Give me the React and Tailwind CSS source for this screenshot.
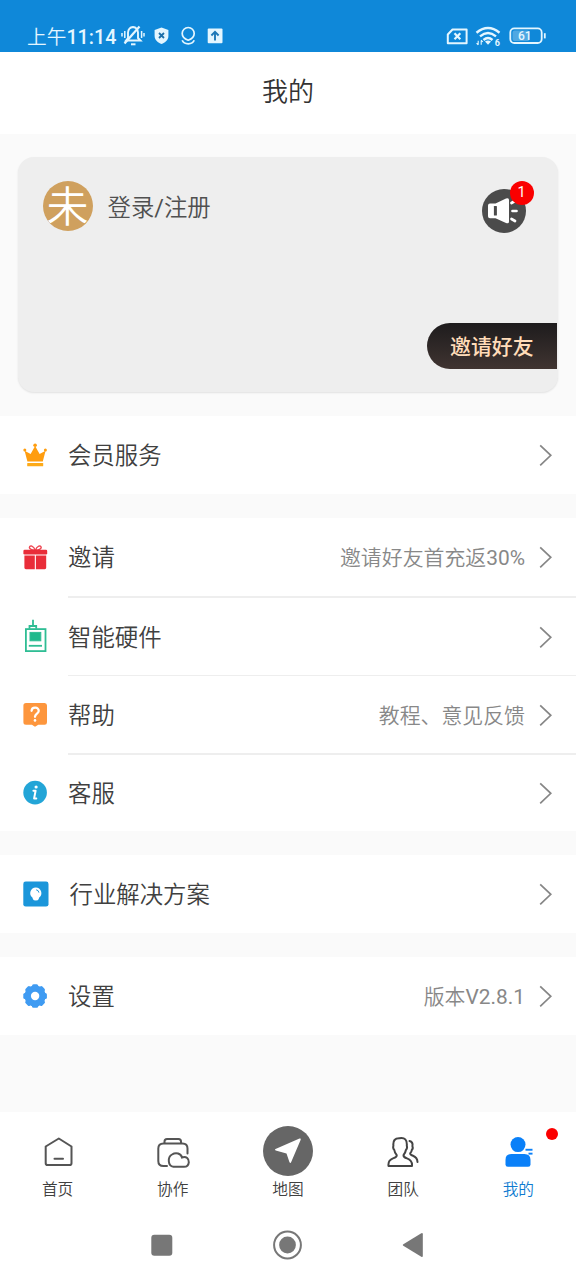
import React from "react";

function Chevron() {
  return (
    <svg className="mr-6 ml-[14px] h-[22px] w-[13px] shrink-0" viewBox="0 0 13 22" fill="none" stroke="#868686" strokeWidth="1.7">
      <path d="M1.2 1.3 L11.8 11.3 L1.2 21.3" />
    </svg>
  );
}

function CrownIcon() {
  return (
    <svg width="26" height="26" viewBox="0 0 26 26" fill="#ff9d0f">
      <path d="M4.4 19.5 L1.6 8.7 L7.6 12.1 L12.1 4 L16.6 12.1 L22.6 8.7 L19.8 19.5 Z" />
      <circle cx="12.1" cy="3.3" r="1.8" />
      <circle cx="1.8" cy="7.9" r="1.5" />
      <circle cx="22.4" cy="7.9" r="1.5" />
      <rect x="4.2" y="20.9" width="16" height="3.4" rx="0.6" fill="#fdaa18" />
    </svg>
  );
}

function GiftIcon() {
  return (
    <svg width="26" height="26" viewBox="0 0 26 26" fill="#e92d39">
      <path d="M12.3 5.4 C10 5 6.6 4.6 6.4 2.6 C6.8 -0.2 10.6 0.4 12.3 5.4 C14 0.4 17.8 -0.2 18.2 2.6 C18 4.6 14.6 5 12.3 5.4 Z" fill="none" stroke="#ee4652" strokeWidth="1.4" />
      <rect x="0.4" y="4.8" width="23.8" height="4.8" rx="1.3" />
      <path d="M1.4 10.6 H11.8 V24.2 H2.9 Q1.4 24.2 1.4 22.8 Z M12.9 10.6 H23.2 V22.8 Q23.2 24.2 21.8 24.2 H12.9 Z" />
    </svg>
  );
}

function DeviceIcon() {
  return (
    <svg width="26" height="36" viewBox="0 0 26 36" fill="none" stroke="#2fbd94" strokeWidth="1.8">
      <rect x="2.9" y="10.1" width="19.6" height="22" />
      <path d="M6.5 9.8 V7 H13.2 V9.8 M10 6.8 V0.8" />
      <path d="M5.8 26.8 H19" />
      <rect x="7" y="13.4" width="10.8" height="8.4" fill="#1fb98c" strokeWidth="1" />
    </svg>
  );
}

function HelpIcon() {
  return (
    <svg width="26" height="26" viewBox="0 0 26 26">
      <path d="M3 0.1 H21.6 Q24 0.1 24 2.6 V19.2 Q24 21.7 21.6 21.7 H15.3 L12 23.8 L8.9 21.7 H3 Q0.4 21.7 0.4 19.2 V2.6 Q0.4 0.1 3 0.1 Z" fill="#fd963d" />
      <path d="M8.6 7.8 C8.8 3.4 15.9 3.6 15.7 8 C15.5 10.8 12.1 10.6 12 13.8" fill="none" stroke="#fff" strokeWidth="2.3" strokeLinecap="round" />
      <circle cx="12" cy="17.4" r="1.3" fill="#fff" />
    </svg>
  );
}

function InfoIcon() {
  return (
    <svg width="26" height="26" viewBox="0 0 26 26">
      <circle cx="12.1" cy="12.6" r="11.8" fill="#23a5d7" />
      <circle cx="13.1" cy="7" r="1.6" fill="#fff" />
      <path d="M10.4 10.8 H12.6 L11.1 18.4 H13.3" fill="none" stroke="#fff" strokeWidth="2" strokeLinejoin="round" strokeLinecap="round" />
    </svg>
  );
}

function BulbIcon() {
  return (
    <svg width="26" height="26" viewBox="0 0 26 26">
      <rect x="0.3" y="0.6" width="25.2" height="25" rx="2.4" fill="#1b96da" />
      <path d="M12.8 6.4 a5.6 5.6 0 0 1 3.4 10 L15.6 18.2 Q15.2 19.6 12.8 19.6 Q10.4 19.6 10 18.2 L9.4 16.4 A5.6 5.6 0 0 1 12.8 6.4 Z" fill="#fff" />
      <path d="M13.2 8.8 Q15.6 9.1 15.9 11.6" stroke="#1b96da" fill="none" strokeWidth="1" />
    </svg>
  );
}

function GearIcon() {
  return (
    <svg width="26" height="26" viewBox="0 0 26 26" fill="#3f9bf2">
      <circle cx="12.1" cy="13" r="10.6" />
      <g>
        <rect x="9" y="1.2" width="6.2" height="23.6" rx="1.6" />
        <rect x="9" y="1.2" width="6.2" height="23.6" rx="1.6" transform="rotate(45 12.1 13)" />
        <rect x="9" y="1.2" width="6.2" height="23.6" rx="1.6" transform="rotate(90 12.1 13)" />
        <rect x="9" y="1.2" width="6.2" height="23.6" rx="1.6" transform="rotate(135 12.1 13)" />
      </g>
      <circle cx="12.1" cy="13" r="4.2" fill="#fff" />
    </svg>
  );
}

function Row({ icon, label, note, height = "h-[78px]", border = "" }) {
  return (
    <div className={`flex items-center ${height}`}>
      <div className="flex w-[68px] shrink-0 items-center pl-[23px]">{icon}</div>
      <div className={`flex h-full flex-1 items-center border-[#eeeeee] ${border}`}>
        <span className="flex-1 pt-[2px] text-[23.4px] leading-8 text-[#404040]">{label}</span>
        {note && <span className="pt-[2px] text-[20.9px] leading-8 text-[#888]">{note}</span>}
        <Chevron />
      </div>
    </div>
  );
}

function StatusBar() {
  return (
    <header className="flex h-[52px] items-start bg-[#0f88d9] pt-[23.5px] pr-[29px] pl-[27px] text-[#e4f6ff]">
      <span className="w-[94px] pt-[1px] text-[19.7px] leading-[26px] whitespace-nowrap">
        上午<span className="font-medium">11:14</span>
      </span>
      <svg width="24" height="24" viewBox="0 0 24 24" fill="none" stroke="currentColor" strokeWidth="1.9">
        <path d="M5 16.5 H19.5 L17 14 V8.5 Q16.5 3.5 12 3 Q7.5 3.5 7 8.5 V14 Z" />
        <path d="M10 20.3 H14.5" strokeWidth="2" />
        <path d="M3.5 19.5 L18.5 2.5" strokeWidth="2.2" />
        <path d="M3.8 7 V14 M1 9 V12.5 M20.6 7 V14 M23 9 V12.5" strokeWidth="1.5" />
      </svg>
      <svg className="ml-[8px]" width="17" height="24" viewBox="0 0 17 24">
        <path d="M8.5 3.5 L15.4 6 V12 C15.4 16 12 18.6 8.5 20 C5 18.6 1.6 16 1.6 12 V6 Z" fill="currentColor" />
        <path d="M6 9 L11 14 M11 9 L6 14" stroke="#1d6fa9" strokeWidth="1.8" />
      </svg>
      <svg className="ml-[10px]" width="16" height="24" viewBox="0 0 16 24" fill="none" stroke="currentColor" strokeWidth="1.7">
        <path d="M8.2 16.2 C4.8 15 2.2 12.6 2.2 9.5 A6 6 0 0 1 14.2 9.5 C14.2 12.6 11.6 15 8.2 16.2 Z" />
        <path d="M2.2 16.3 C4 21 12.4 21 14.2 16.3" />
      </svg>
      <svg className="ml-[11px]" width="16" height="24" viewBox="0 0 16 24">
        <rect x="0.7" y="4.5" width="14.8" height="14.8" rx="1" fill="currentColor" />
        <path d="M8 16.5 V8 M4.4 11.5 L8 7.8 L11.6 11.5" fill="none" stroke="#1d78b8" strokeWidth="1.9" />
      </svg>
      <div className="flex-1" />
      <svg width="22" height="24" viewBox="0 0 22 24" fill="none" stroke="currentColor" strokeWidth="2">
        <path d="M6.5 5.5 H20.6 V19.3 H1.8 V10.5 Z" strokeLinejoin="round" />
        <path d="M8.5 9.2 L14.3 15.2 M14.3 9.2 L8.5 15.2" strokeWidth="2.2" />
      </svg>
      <svg className="ml-[7px]" width="27" height="24" viewBox="0 0 27 24" fill="none" stroke="currentColor" strokeWidth="2.4">
        <path d="M1.5 8.8 Q13 -0.7 24.5 8.8 M5 12.4 Q13 5.7 21 12.4 M8.5 16 Q13 12.2 17.5 16" />
        <path d="M10 17.6 Q13 15.4 16 17.6 L13 20.8 Z" fill="currentColor" stroke="none" />
        <path d="M3.2 16.8 V20.8 M1.6 19.2 L3.2 21 M6.2 20.8 V16.4 M6.2 16.2 L7.8 18" strokeWidth="1.1" />
        <text x="19.8" y="21.5" fill="currentColor" stroke="none" className="font-[Roboto] text-[9px] font-bold">6</text>
      </svg>
      <svg className="ml-[7px]" width="38" height="24" viewBox="0 0 38 24" fill="none" stroke="currentColor" strokeWidth="1.8">
        <rect x="1.3" y="4.4" width="31.4" height="14.6" rx="4" />
        <rect x="3.5" y="6.4" width="17" height="10.6" rx="2" fill="#4fa8e2" stroke="none" />
        <path d="M35.8 9.2 V14.4" />
        <text x="15.8" y="16" textAnchor="middle" fill="currentColor" stroke="none" className="font-[Roboto] text-[12px] font-medium">61</text>
      </svg>
    </header>
  );
}

function Tab({ icon, label, active }) {
  return (
    <div className="relative flex w-[115.2px] flex-col items-center pt-[14px]">
      <div className="flex h-[50px] items-center justify-center">{icon}</div>
      <span className={active ? "pt-[1px] text-[15.7px] leading-[26px] text-[#0e7bd0]" : "pt-[1px] text-[15.7px] leading-[26px] text-[#404040]"}>{label}</span>
      {active && <span className="absolute top-[16.5px] left-[85.7px] h-3 w-3 rounded-full bg-[#fb0000]" />}
    </div>
  );
}

export default function App() {
  return (
    <div className="flex h-[1280px] w-[576px] flex-col overflow-hidden bg-[#fafafa] font-['Roboto','Noto_Sans_CJK_SC',sans-serif] font-[350]">
      <StatusBar />
      <div className="flex h-[82px] items-center justify-center bg-white pb-[2px] text-[26px] text-[#333]">我的</div>

      <section className="mx-[18px] mt-[23px] flex h-[235px] flex-col justify-between rounded-[16px] bg-[#eeeeee] pb-[23px] shadow-[0_1px_2px_rgba(0,0,0,0.1)]">
        <div className="flex items-center pt-[22.6px] pl-[24.5px]">
          <div className="flex h-[50px] w-[50px] shrink-0 items-center justify-center overflow-hidden rounded-full bg-[#cfa05e] text-[42px] leading-[50px] text-white">
            <span className="pt-[4px]">未</span>
          </div>
          <span className="ml-[15px] flex-1 pt-[4px] text-[23.4px] text-[#505050]">
            登录<span className="font-normal">/</span>注册
          </span>
          <div className="relative mt-[9px] mr-[32px] h-11 w-11">
            <svg width="44" height="44" viewBox="0 0 44 44">
              <circle cx="22" cy="22" r="22" fill="#4b4b4b" />
              <path d="M8 14.5 H13.5 L24 9.5 Q27 8.3 27 11 V32.5 Q27 35.2 24 34 L13.5 29.3 H8 Q6 29.3 6 27.3 V16.5 Q6 14.5 8 14.5 Z" fill="#fff" />
              <rect x="11.9" y="17" width="3" height="9.5" rx="0.5" fill="#4b4b4b" />
              <path d="M30.5 22 H34.5 M29.5 30 L33 32 M29.5 14 L33 12" stroke="#fff" strokeWidth="2.7" strokeLinecap="round" />
            </svg>
            <span className="absolute -top-[8px] left-[27.5px] flex h-6 w-6 items-center justify-center rounded-full bg-[#fa0000] text-[14.5px] font-normal text-white">1</span>
          </div>
        </div>
        <div className="mr-[1px] flex h-[46px] w-[130px] items-center self-end rounded-l-full bg-gradient-to-b from-[#1e1c1d] to-[#403431] pt-[4px] pl-[23px] text-[20.9px] font-medium whitespace-nowrap text-[#ffdcb9]">
          邀请好友
        </div>
      </section>

      <section className="mt-[24px] bg-white">
        <Row icon={<CrownIcon />} label="会员服务" />
      </section>
      <section className="mt-6 bg-white">
        <Row
          icon={<GiftIcon />}
          label="邀请"
          note={<>邀请好友首充返<span className="font-normal">30%</span></>}
          height="h-[80px]"
          border="border-b-2"
        />
        <Row icon={<DeviceIcon />} label="智能硬件" border="border-b" />
        <Row icon={<HelpIcon />} label="帮助" note="教程、意见反馈" height="h-[79px]" border="border-b-2" />
        <Row icon={<InfoIcon />} label="客服" height="h-[76px]" />
      </section>
      <section className="mt-6 bg-white">
        <Row icon={<BulbIcon />} label={<span className="pl-[1.5px]">行业解决方案</span>} />
      </section>
      <section className="mt-6 bg-white">
        <Row icon={<GearIcon />} label="设置" note={<>版本<span className="font-normal">V2.8.1</span></>} />
      </section>

      <div className="flex-1" />

      <nav className="flex h-[100px] shrink-0 bg-white">
        <Tab
          label="首页"
          icon={
            <svg className="mt-[2px]" width="30" height="30" viewBox="0 0 30 30" fill="none" stroke="#555" strokeWidth="2" strokeLinejoin="round" strokeLinecap="round">
              <path d="M15.8 1.5 L28.5 9.5 V26.2 Q28.5 28 26.7 28 H4.5 Q2.7 28 2.7 26.2 V9.5 Z" />
              <path d="M11.5 21.8 H20" />
            </svg>
          }
        />
        <Tab
          label="协作"
          icon={
            <svg className="mt-[5px]" width="34" height="32" viewBox="0 0 34 32" fill="none" stroke="#555" strokeWidth="2" strokeLinecap="round">
              <path d="M8.5 6 V4.5 Q8.5 2 11 2 H22.5 Q25 2 25 4.5 V6" />
              <path d="M11 29 H7.5 Q2.3 29 2.3 24 V11.5 Q2.3 6.5 7.5 6.5 H26.5 Q31.5 6.5 31.5 11.5 V16.5" />
              <path d="M17.5 29.8 C11.5 28.8 11.5 20 16 17.5 C20 15 25 16.5 26 20.5 C30.5 19 33 22 32.8 25.3 C32.5 28.2 30.5 29.8 28 29.8 Z" />
            </svg>
          }
        />
        <Tab
          label="地图"
          icon={
            <svg width="50" height="50" viewBox="0 0 50 50">
              <circle cx="25" cy="25" r="25" fill="#666" />
              <path d="M12.5 23 L36.5 12.5 Q38.2 12 37.7 13.7 L28.2 36 Q27.4 38 26.4 36 L23.5 27.5 L12.7 24.4 Q11.2 23.7 12.5 23 Z" fill="#fff" />
            </svg>
          }
        />
        <Tab
          label="团队"
          icon={
            <svg className="mt-[2px]" width="32" height="32" viewBox="0 0 32 32" fill="none" stroke="#444" strokeWidth="2" strokeLinejoin="round" strokeLinecap="round">
              <path d="M1.5 30 Q0.8 24.3 6 22.4 Q10.4 21 9.6 18.8 Q7.6 16.6 7.3 14 Q5.6 12.5 6.4 9.8 Q5.6 2 12.5 2.2 Q20.5 0.8 19.8 9.8 Q20.6 12.5 18.9 14 Q18.5 16.6 16.6 18.8 Q16 21 20 22.4 Q25.5 24.3 25 30 Z" />
              <path d="M22.5 5 Q26.3 6 25.4 10.2 Q26.4 12.5 24.8 14 Q24.6 16 23.2 17.2 Q22.8 18.6 26 19.8 Q30.3 21.5 30.5 26" />
            </svg>
          }
        />
        <Tab
          label="我的"
          active
          icon={
            <svg className="mt-[2px]" width="30" height="32" viewBox="0 0 30 32" fill="#0a80f8">
              <circle cx="15" cy="8.6" r="7.5" />
              <path d="M2.5 24 Q2.5 18 8.5 18 H21.5 Q27.5 18 27.5 24 V28.5 Q27.5 30.8 25.2 30.8 H4.8 Q2.5 30.8 2.5 28.5 Z" />
              <rect x="22.5" y="12.8" width="7" height="1.9" />
              <rect x="25.5" y="16.7" width="4" height="1.9" />
            </svg>
          }
        />
      </nav>

      <footer className="flex h-[68.5px] shrink-0 justify-center gap-[98.5px] bg-white pt-[17.5px]">
        <svg width="24" height="32" viewBox="0 0 24 32">
          <rect x="0.3" y="5.7" width="21" height="21" rx="3" fill="#777" />
        </svg>
        <svg width="30" height="32" viewBox="0 0 30 32">
          <circle cx="14.5" cy="16" r="13.4" fill="none" stroke="#777" strokeWidth="2" />
          <circle cx="14.5" cy="16" r="8.4" fill="#777" />
        </svg>
        <svg width="24" height="32" viewBox="0 0 24 32">
          <path d="M1.3 15.2 L19.3 4.3 Q20.8 3.6 20.8 5.3 V26.7 Q20.8 28.4 19.3 27.7 L1.3 16.8 Q0.1 16 1.3 15.2 Z" fill="#777" />
        </svg>
      </footer>
    </div>
  );
}
